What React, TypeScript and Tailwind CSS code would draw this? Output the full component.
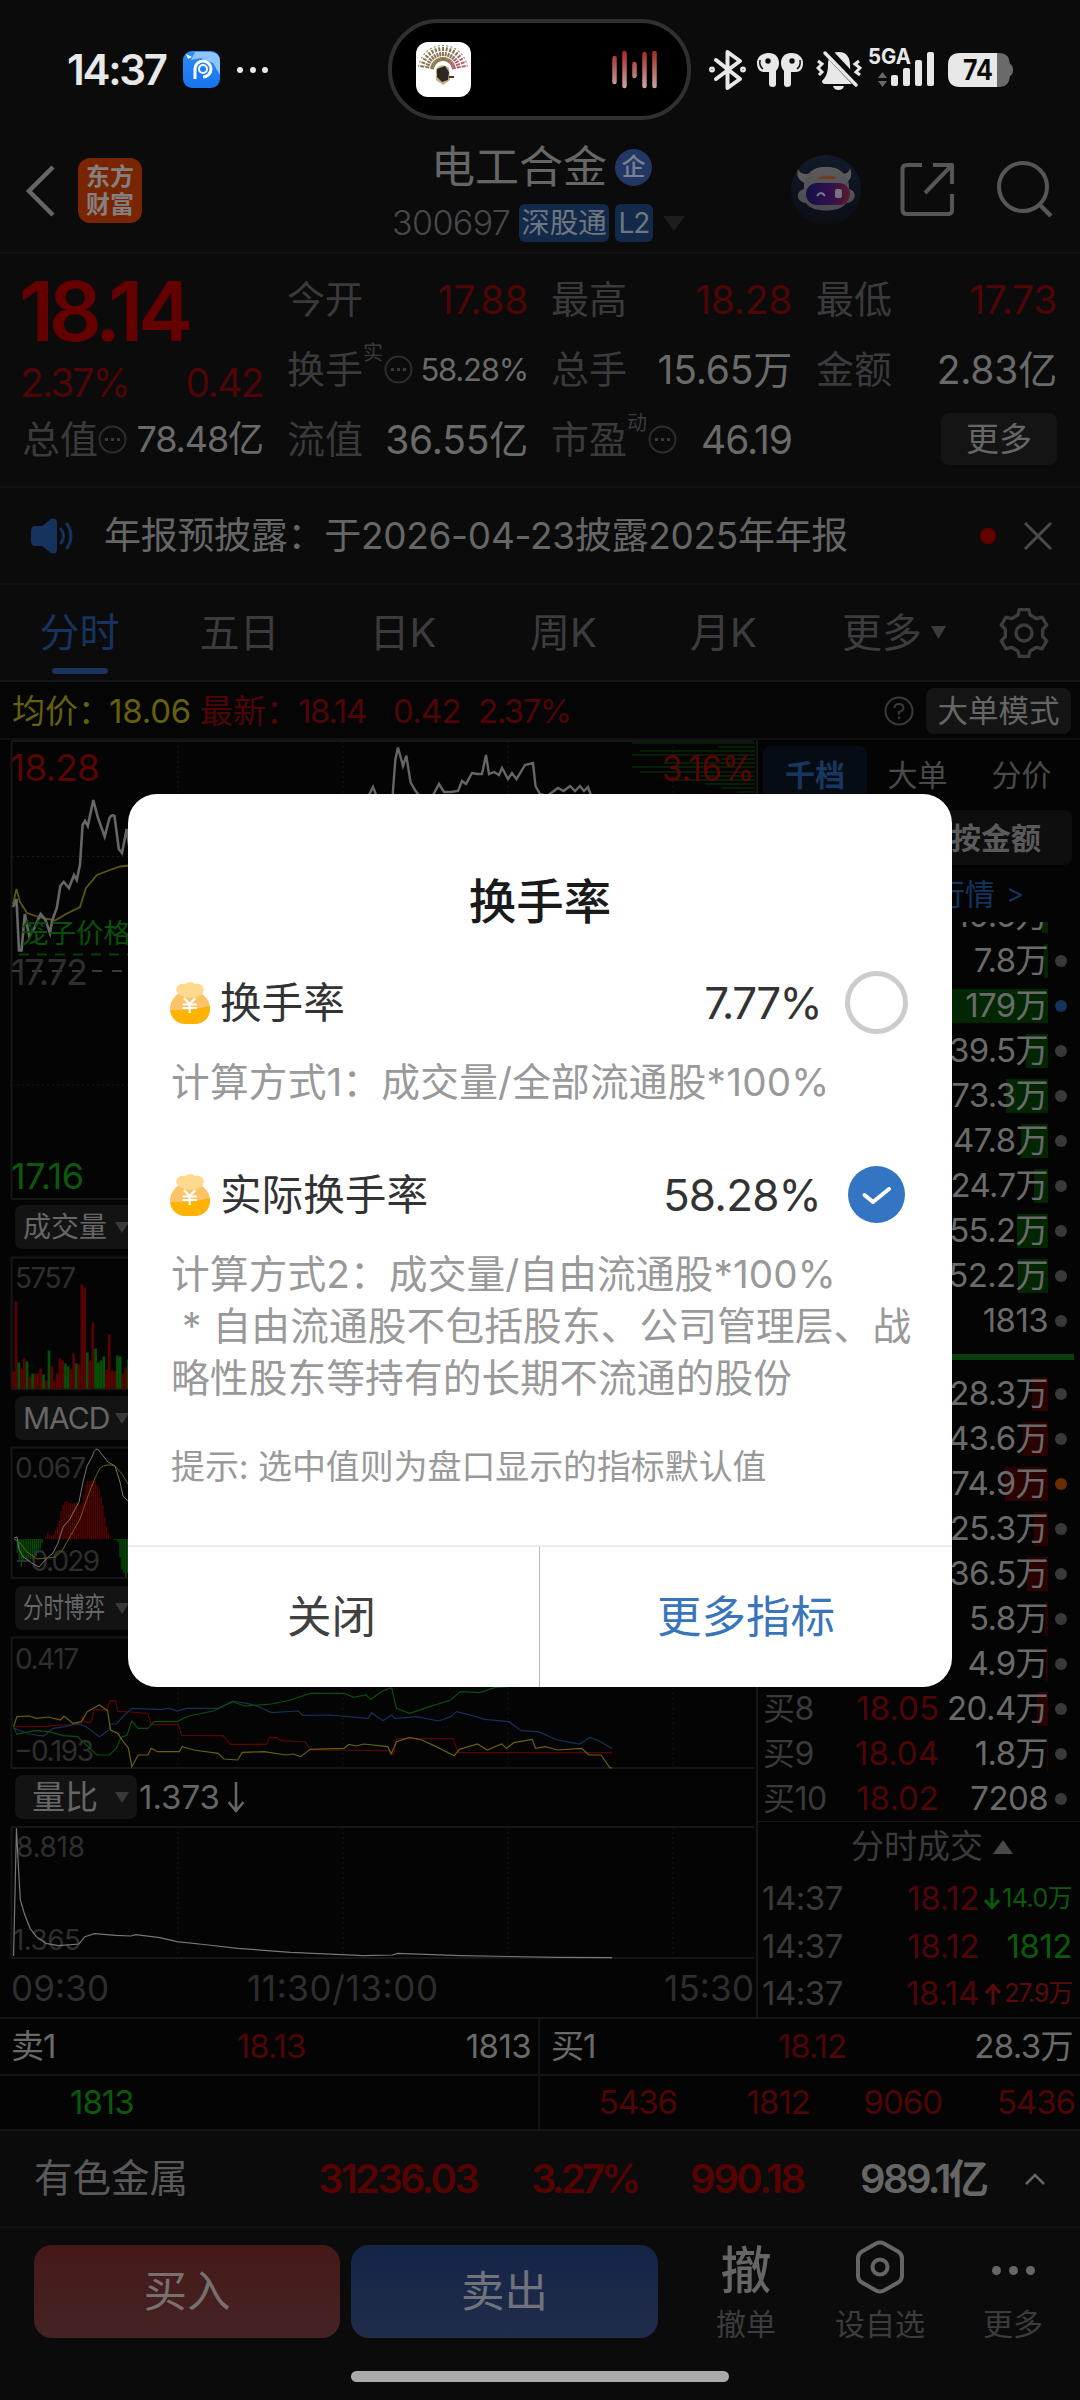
const FONT = "font-['Inter','Noto_Sans_CJK_SC',sans-serif]";

/* ---------- status bar ---------- */

const BluetoothIcon = () => (
  <svg width="37" height="42" viewBox="0 0 37 42" fill="none" stroke="#e8e8e8" strokeWidth="4" strokeLinejoin="round" strokeLinecap="round">
    <path d="M7 11 L31 30 L18.5 39 L18.5 3 L31 12 L7 30" />
    <circle cx="3" cy="20.5" r="1.2" strokeWidth="3.5" />
    <circle cx="34" cy="20.5" r="1.2" strokeWidth="3.5" />
  </svg>
);

const EarbudsIcon = () => (
  <svg width="48" height="36" viewBox="0 0 48 36" fill="#e8e8e8">
    <path d="M13 1 C5 1 1 6 1 11 C1 17 4 20 8 20 L13 20 L13 32 Q13 35 17 35 Q20 35 20 32 L20 19 C22 17 23 14 23 11 C23 5 19 1 13 1 Z" />
    <path d="M35 1 C43 1 47 6 47 11 C47 17 44 20 40 20 L35 20 L35 32 Q35 35 31 35 Q28 35 28 32 L28 19 C26 17 25 14 25 11 C25 5 29 1 35 1 Z" />
    <circle cx="12" cy="9" r="2.700" fill="#0b0b0b" />
    <circle cx="36" cy="9" r="2.700" fill="#0b0b0b" />
    <path d="M4 8 Q3 14 7 17" stroke="#0b0b0b" strokeWidth="1.500" fill="none" />
    <path d="M44 8 Q45 14 41 17" stroke="#0b0b0b" strokeWidth="1.500" fill="none" />
  </svg>
);

const MutedBellIcon = () => (
  <svg width="46" height="40" viewBox="0 0 46 40" fill="#e8e8e8">
    <path d="M23 2 C14 2 12 9 12 15 C12 24 9 28 6 31 Q6 34 9 34 L37 34 Q40 34 40 31 C36 27 34 22 34 15 C34 8 31 2 23 2 Z" />
    <path d="M17 36 L28 36 Q27 40 22.500 40 Q18 40 17 36 Z" />
    <path d="M8 -2 L42 34" stroke="#0b0b0b" strokeWidth="9" />
    <path d="M9 3 L40 35" stroke="#e8e8e8" strokeWidth="3.500" strokeLinecap="round" />
    <path d="M2 11 L6 14 L2 18 L6 22 L3 25" fill="none" stroke="#e8e8e8" strokeWidth="3" />
    <path d="M43 11 L39 14 L44 18 L40 22 L44 25" fill="none" stroke="#e8e8e8" strokeWidth="3" />
  </svg>
);

const SignalIcon = () => (
  <svg width="68" height="42" viewBox="-2 0 68 42" fill="#e8e8e8">
    <text x="-1" y="17" fontSize="22" fontWeight="700" textLength="43" lengthAdjust="spacingAndGlyphs">5GA</text>
    <path d="M13.500 25 L18 31 L9 31 Z M9 34 L18 34 L13.500 40 Z" fill="#6a6a6a" />
    <rect x="22" y="28" width="7" height="11" rx="2" />
    <rect x="34" y="21" width="7" height="18" rx="2" />
    <rect x="46" y="13" width="7" height="26" rx="2" />
    <rect x="58" y="5" width="7" height="34" rx="2" />
  </svg>
);

const BatteryIcon = () => (
  <svg width="66" height="34" viewBox="0 0 66 34">
    <path d="M49 0 H52 Q61 0 62 11 Q65 12 65 17 Q65 22 62 23 Q61 34 52 34 H49 Z" fill="#6a6a6a" />
    <path d="M12 0 H49 V34 H12 Q0 34 0 22 V12 Q0 0 12 0 Z" fill="#e8e8e8" />
    <text x="15" y="27" fontSize="28" fontWeight="700" fill="#0b0b0b" textLength="30" lengthAdjust="spacingAndGlyphs">74</text>
  </svg>
);

const fanRays = Array.from({ length: 17 }, (_, i) => -80 + i * 10);

const StatusBar = () => (
  <div className="flex h-[138px] pt-[19px] text-[#e8e8e8]">
    <div className="flex h-[101px] w-[388px] items-center pl-[67px]">
      <span className="w-[116px] text-[42px] leading-none font-semibold tracking-[-2.3px]">14:37</span>
      <svg width="37" height="37" viewBox="0 0 37 37">
        <defs>
          <linearGradient id="appBlue" x1="0" y1="0" x2="0" y2="1">
            <stop offset="0" stopColor="#2f8df5" />
            <stop offset="1" stopColor="#1673ee" />
          </linearGradient>
        </defs>
        <rect width="37" height="37" rx="9" fill="url(#appBlue)" />
        <path d="M8 9 L12 1 H28 Q37 2 37 10 V24 L30 12 L18 7 Z" fill="#8cc4fb" />
        <path d="M12 28 V18 A8 8 0 1 1 20 26" fill="none" stroke="#fff" strokeWidth="3" />
        <circle cx="20" cy="18" r="4" fill="none" stroke="#fff" strokeWidth="2" />
        <path d="M3 3 L9 6 L5 8 Z" fill="#fff" />
      </svg>
      <div className="ml-[17px] flex gap-[6.5px]">
        <i className="h-1.5 w-1.5 rounded-full bg-[#e8e8e8]" />
        <i className="h-1.5 w-1.5 rounded-full bg-[#e8e8e8]" />
        <i className="h-1.5 w-1.5 rounded-full bg-[#e8e8e8]" />
      </div>
    </div>
    <div className="flex h-[101px] w-[303px] items-center justify-between rounded-[50px] border-4 border-[#303030] bg-black pr-[29px] pl-6">
      <svg width="55" height="55" viewBox="0 0 55 55">
        <rect width="55" height="55" rx="12" fill="#fff" />
        {fanRays.map((a) => (
          <path key={a} d="M27 19 L27 3" stroke={a > 40 ? "#b0606a" : "#8a7350"} strokeWidth="2" strokeDasharray="4 1" transform={`rotate(${a} 27 28)`} />
        ))}
        <path d="M20 27 Q26 20 33 26 L34 38 L27 43 L20 38 Z" fill="#c9b083" />
        <path d="M21 27 L29 24 L33 30 L32 38 L26 40 L21 35 Z" fill="#2b2722" />
        <path d="M33 35 H38" stroke="#4a3a22" strokeWidth="2" />
      </svg>
      <svg width="46" height="38" viewBox="0 0 46 38">
        <defs>
          <linearGradient id="wave" gradientUnits="userSpaceOnUse" x1="0" y1="0" x2="0" y2="38">
            <stop offset="0" stopColor="#a5281f" />
            <stop offset="1" stopColor="#c9aaa4" />
          </linearGradient>
        </defs>
        <path d="M2.500 7 V31 M12.500 2 V35 M22.500 13 V25 M32.500 3 V35 M42.500 2 V35" stroke="url(#wave)" strokeWidth="4.500" strokeLinecap="round" fill="none" />
      </svg>
    </div>
    <div className="flex h-[101px] items-center pl-[18px]">
      <BluetoothIcon />
      <div className="ml-2.5"><EarbudsIcon /></div>
      <div className="ml-[12px]"><MutedBellIcon /></div>
      <div className="mb-1 ml-[5px]"><SignalIcon /></div>
      <div className="ml-[13px]"><BatteryIcon /></div>
    </div>
  </div>
);

/* ---------- title bar ---------- */

const RobotIcon = () => (
  <svg width="70" height="70" viewBox="0 0 70 70">
    <defs>
      <linearGradient id="robotBg" x1="0" y1="0" x2="0" y2="1">
        <stop offset="0" stopColor="#101a2a" />
        <stop offset="1" stopColor="#0b0e14" />
      </linearGradient>
      <linearGradient id="robotHead" x1="0" y1="0" x2="0" y2="1">
        <stop offset="0" stopColor="#5c5a5c" />
        <stop offset="1" stopColor="#4a4a4f" />
      </linearGradient>
      <linearGradient id="visor" x1="0" y1="0" x2="1" y2="0">
        <stop offset="0" stopColor="#14104a" />
        <stop offset="0.6" stopColor="#32124a" />
        <stop offset="1" stopColor="#5c1a2c" />
      </linearGradient>
    </defs>
    <circle cx="35" cy="35" r="35" fill="url(#robotBg)" />
    <path d="M7 14 Q4 24 14 28 L20 18 Q10 21 7 14 Z M59 13 Q63 24 54 28 L48 18 Q57 21 59 13 Z" fill="#5c5a5c" />
    <path d="M35 12 C20 11 12 22 13 34 C4 36 5 47 15 48 C20 58 50 58 55 48 C65 48 67 36 58 34 C59 22 50 11 35 12 Z" fill="url(#robotHead)" />
    <path d="M28 22 Q35 19 45 22 L44 24 H28 Z" fill="#6e3e22" />
    <rect x="15" y="28" width="44" height="22" rx="11" fill="url(#visor)" />
    <path d="M26 41 Q30 35 34 41" stroke="#77778c" strokeWidth="2" fill="none" />
    <rect x="44" y="34" width="7" height="9" rx="2" fill="#7a7280" />
  </svg>
);

const TitleBar = () => (
  <div className="flex h-[116px] border-b-2 border-[#121213]">
    <div className="flex w-[392px] items-start pt-[20px] pl-[24px]">
      <svg className="mt-1.5" width="32" height="54" viewBox="0 0 32 54" fill="none" stroke="#666" strokeWidth="4.500">
        <path d="M29 3 L5 27 L29 51" />
      </svg>
      <div className="ml-[22px] flex h-[65px] w-[64px] flex-col items-center justify-center rounded-[12px] bg-[#7a2502] text-[24px] leading-[28px] font-semibold text-[#858080]">
        <span>东方</span>
        <span>财富</span>
      </div>
    </div>
    <div className="flex w-[301px] flex-col">
      <div className="flex h-[58px] items-center pl-[39px]">
        <span className="text-[44px] leading-none text-[#666]">电工合金</span>
        <span className="ml-[8px] flex h-[37px] w-[37px] items-center justify-center rounded-full bg-[#233764] text-[24px] leading-none font-medium text-[#7c8090]">企</span>
      </div>
      <div className="flex h-[54px] items-center">
        <span className="w-[127px] text-[34px] leading-none font-light tracking-[-0.6px] text-[#48484a]">300697</span>
        <span className="flex h-[38px] w-[90px] items-center justify-center rounded-md bg-[#12294a] text-[28.5px] leading-none text-[#6f7680]">深股通</span>
        <span className="ml-1.5 flex h-[38px] w-[38px] items-center justify-center rounded-md bg-[#12294a] text-[28px] leading-none tracking-[-1px] text-[#6f7680]">L2</span>
        <svg className="ml-[10px]" width="22" height="15" viewBox="0 0 22 15"><path d="M0 0 H22 L11 15 Z" fill="#1d1d1e" /></svg>
      </div>
    </div>
    <div className="flex items-start pt-[17px] pl-[98px]">
      <RobotIcon />
      <svg className="mt-[7px] ml-[39px]" width="55" height="55" viewBox="0 0 55 55" fill="none" stroke="#565656" strokeWidth="4" strokeLinejoin="round">
        <path d="M22 3 H7 Q2.500 3 2.500 7 V48 Q2.500 52 7 52 H48 Q52 52 52 48 V32" />
        <path d="M33 3 H52 V22 M52 3 L25 31" />
      </svg>
      <svg className="mt-[6px] ml-[42px]" width="56" height="56" viewBox="0 0 56 56" fill="none" stroke="#565656" strokeWidth="4">
        <circle cx="26" cy="26" r="24" />
        <path d="M42 43 L54 55" strokeWidth="4.500" />
      </svg>
    </div>
  </div>
);

/* ---------- quote grid ---------- */

const DotsCircle = () => (
  <svg width="29" height="29" viewBox="0 0 29 29" className="shrink-0">
    <circle cx="14.500" cy="14.500" r="13" fill="none" stroke="#2c2c2e" strokeWidth="2" />
    <path d="M7 14.500 h3 M13 14.500 h3 M19 14.500 h3" stroke="#3a3a3c" strokeWidth="3" />
  </svg>
);

type CellProps = { label: string; value: string; sup?: string; dots?: boolean; valueClass: string };

const Cell = ({ label, value, sup, dots, valueClass }: CellProps) => (
  <div className="flex h-[70px] items-center justify-between">
    <div className="flex items-center">
      <span className="text-[38px] leading-none text-[#3a3a3c]">{label}</span>
      {sup && <span className="-mt-[32px] mr-px text-[20px] leading-none text-[#3a3a3c]">{sup}</span>}
      {dots && <DotsCircle />}
    </div>
    <span className={`leading-none whitespace-nowrap ${valueClass}`}>{value}</span>
  </div>
);

const RED = "text-[39px] tracking-[-0.3px] text-[#4f0505]";
const GRAY = "text-[39px] tracking-[-0.2px] text-[#6a6a6a]";

const QuoteGrid = () => (
  <div className="flex h-[234px] border-b-2 border-[#121213] pl-[22px]">
    <div className="w-[241px]">
      <div className="flex h-[107px] items-center pt-2">
        <span className="-ml-[3px] text-[83px] leading-none font-semibold tracking-[-5.4px] text-[#640000]">18.14</span>
      </div>
      <div className="flex h-[43px] items-center justify-between text-[39px] leading-none text-[#4f0505]">
        <span className="-ml-[2px] tracking-[-1.9px]">2.37%</span>
        <span className="tracking-[-1.6px]">0.42</span>
      </div>
      <Cell label="总值" value="78.48亿" dots valueClass="text-[36px] tracking-[-1.1px] text-[#6a6a6a]" />
    </div>
    <div className="ml-[24px] w-[241px] pt-[10px]">
      <Cell label="今开" value="17.88" valueClass={RED} />
      <Cell label="换手" value="58.28%" sup="实" dots valueClass="text-[31px] tracking-[-1.2px] text-[#6a6a6a]" />
      <Cell label="流值" value="36.55亿" valueClass={GRAY} />
    </div>
    <div className="ml-[23px] w-[241px] pt-[10px]">
      <Cell label="最高" value="18.28" valueClass={RED} />
      <Cell label="总手" value="15.65万" valueClass={GRAY} />
      <Cell label="市盈" value="46.19" sup="动" dots valueClass="text-[39px] tracking-[-1px] text-[#6a6a6a]" />
    </div>
    <div className="ml-[24px] w-[241px] pt-[10px]">
      <Cell label="最低" value="17.73" valueClass={RED} />
      <Cell label="金额" value="2.83亿" valueClass={GRAY} />
      <div className="flex h-[70px] items-center justify-end">
        <button className="h-[52px] w-[116px] rounded-[8px] bg-[#141415] text-[33px] leading-none text-[#666]">更多</button>
      </div>
    </div>
  </div>
);

const Notice = () => (
  <div className="flex h-[97px] items-center border-b-2 border-[#121213] pl-[31px]">
    <svg width="43" height="36" viewBox="0 0 43 36">
      <path d="M0 13 Q0 8 5 8 H11 L20 1 Q26 -1 26 5 V31 Q26 37 20 35 L11 28 H5 Q0 28 0 23 Z" fill="#15335c" />
      <path d="M30 11 Q35 18 30 25 M36 6 Q44 18 36 30" fill="none" stroke="#15335c" strokeWidth="3" strokeLinecap="round" />
    </svg>
    <span className="ml-[30px] w-[876px] text-[37px] leading-none tracking-[-0.3px] whitespace-nowrap text-[#666]">年报预披露：于2026-04-23披露2025年年报</span>
    <i className="h-[16px] w-[16px] rounded-full bg-[#640000]" />
    <svg className="ml-[28px]" width="28" height="28" viewBox="0 0 28 28" stroke="#4a4a4c" strokeWidth="3"><path d="M1 1 L27 27 M27 1 L1 27" /></svg>
  </div>
);

// six square teeth: (angle offset, radius) corners repeated every 60deg
const gearPoints = Array.from({ length: 6 }, (_, i) => i * 60 - 90)
  .flatMap((a) => [[a - 19, 19], [a - 11, 24], [a + 11, 24], [a + 19, 19]])
  .map(([a, r]) => `${25 + r * Math.cos((a * Math.PI) / 180)},${25 + r * Math.sin((a * Math.PI) / 180)}`)
  .join(" ");

const GearIcon = () => (
  <svg width="50" height="50" viewBox="0 0 50 50" fill="none" stroke="#3c3c3e" strokeWidth="3.400" strokeLinejoin="round">
    <polygon points={gearPoints} />
    <circle cx="25" cy="25" r="8" />
  </svg>
);

const Tabs = () => (
  <div className="flex h-[97px] items-center border-b-2 border-[#151516] text-[40px] leading-none text-[#3c3c3e]">
    <div className="flex h-full w-[159px] flex-col items-center pt-[28px] text-[#15335c]">
      <span>分时</span>
      <i className="mt-[15px] h-[6px] w-[56px] rounded-full bg-[#15335c]" />
    </div>
    <span className="w-[161px] text-center">五日</span>
    <span className="w-[166px] text-center">日K</span>
    <span className="w-[155px] text-center">周K</span>
    <span className="w-[165px] text-center">月K</span>
    <span className="ml-[36px]">更多</span>
    <svg className="ml-[9px]" width="15" height="13" viewBox="0 0 15 13"><path d="M0 0 H15 L7.500 13 Z" fill="#3c3c3e" /></svg>
    <div className="ml-[53px]"><GearIcon /></div>
  </div>
);

const PriceInfo = () => (
  <div className="flex h-[58px] items-center border-b-2 border-[#111] bg-[#050505] pt-[2px] pl-[12px] text-[33px] leading-none">
    <span className="w-[97px] whitespace-nowrap text-[#66600e]">均价：</span>
    <span className="w-[91px] tracking-[-0.2px] text-[#66600e]">18.06</span>
    <span className="w-[98px] whitespace-nowrap text-[#4f0505]">最新：</span>
    <span className="w-[95px] tracking-[-1.3px] text-[#4f0505]">18.14</span>
    <span className="w-[85px] tracking-[-0.8px] text-[#4f0505]">0.42</span>
    <span className="w-[406px] tracking-[-1.5px] text-[#4f0505]">2.37%</span>
    <svg width="30" height="30" viewBox="0 0 30 30" fill="none" stroke="#3a3a3c" strokeWidth="2">
      <circle cx="15" cy="15" r="13.500" />
      <path d="M10.500 12 Q10.500 8 15 8 Q19.500 8 19.500 12 Q19.500 14.500 15 16 V18.500 M15 20.500 V23" />
    </svg>
    <button className="ml-[12px] h-[46px] w-[145px] rounded-[8px] bg-[#141415] text-[30.5px] leading-none text-[#666]">大单模式</button>
  </div>
);

/* ---------- charts (user units = page pixels, y offset by viewBox) ---------- */

const GRID_X = [178, 343, 508, 673];

const Frame = ({ top, bottom, rows = [] }: { top: number; bottom: number; rows?: number[] }) => (
  <g stroke="#161617" strokeWidth="2" fill="none">
    <path d={`M11.500 ${top} H754 M11.500 ${bottom} H754 M11.500 ${top} V${bottom}`} />
    {GRID_X.map((x) => (
      <path key={x} d={`M${x} ${top} V${bottom}`} strokeWidth="1" strokeDasharray="2 3" />
    ))}
    {rows.map((y) => (
      <path key={y} d={`M12 ${y} H754`} strokeWidth="1" strokeDasharray="2 3" />
    ))}
  </g>
);

// depth lines at the right edge of the price chart: [y, startX]
const DEPTH: [number, number][] = [
  [742, 632], [746, 718], [750, 640], [754, 632], [758, 722], [762, 664], [766, 632],
  [771, 640], [775, 700], [779, 668], [783, 705], [787, 722], [791, 737],
];

const PriceChart = () => (
  <svg width="757" height="465" viewBox="0 739 757 465" className="block">
    <Frame top={740} bottom={1198} rows={[855.5, 1084]} />
    {DEPTH.map(([y, x]) => (
      <path key={y} d={`M${x} ${y} H755`} stroke="#052805" strokeWidth="1.400" />
    ))}
    <text x="10" y="780" fontSize="37" fill="#5a0404" textLength="90">18.28</text>
    <text x="662" y="780" fontSize="36" fill="#5a0404" textLength="92" lengthAdjust="spacingAndGlyphs">3.16%</text>
    <path d="M13 903 L16.500 888 L20 901 L27 912 L40 916.500 L55 919.500 L66 913 L80 906 L86 887 L97 874 L110 869 L120 865.500 L140 863.500" fill="none" stroke="#5c5610" strokeWidth="1.800" />
    <path d="M13 906 L16.500 898 L19 949.500 L21.500 949.500 L24.800 913 L29.300 935 L34.400 927 L40.600 913 L45.500 919 L50 932 L52.300 919 L56.800 907 L60.300 885 L63.700 881 L69 887 L74 874 L76.800 879 L80 863.500 L82.600 824 L85 820 L87.800 825 L93.300 799 L98 817 L104.700 835.500 L109.500 817 Q112 813 114.500 815 L118.800 848 L122 852 L126.700 828 L130 851" fill="none" stroke="#666" strokeWidth="2.600" />
    <path d="M369 794 L373 786 L377 796 M392.500 796 L395.300 759 L398 746.500 L403 765 L406.300 754.500 L410.500 781 L415 789 L420 796 M432 796 L439 783 L444 791 L451 791 L458 790 L462 780 L466 783 L472 772 L477 773 L482 773 L486 754 L489 773 L494 771 L499 774 L502 767 L508 778 L512 772 L516.500 778 L525 764 L533 762 L535.500 785 L540 793 L547 795 L558 787 L563.600 790 L570 785 L575 790 L580 785 L584 790 L588 786 L592 797" fill="none" stroke="#666" strokeWidth="2.400" />
    <path d="M19 953.500 H740" stroke="#073f07" strokeWidth="2" strokeDasharray="10 8" />
    <path d="M12 970 H740" stroke="#3a3a3c" strokeWidth="2" strokeDasharray="10 10" />
    <text x="21" y="941.500" fontSize="27.500" fill="#0a4f0a">笼子价格</text>
    <text x="11" y="983.500" fontSize="36" fill="#2e2e30" textLength="77">17.72</text>
    <text x="11" y="1188" fontSize="36" fill="#0b5a0b" textLength="73">17.16</text>
  </svg>
);

const Chip = ({ label, labelClass, value }: { label: string; labelClass: string; value?: string }) => (
  <div className="flex h-[44px] items-center pl-[15px]">
    <div className="flex h-[44px] w-[122px] items-center justify-between rounded-[8px] bg-[#131314] pr-[8px] text-[#666]">
      <span className={`leading-none whitespace-nowrap ${labelClass}`}>{label}</span>
      <svg className="shrink-0" width="14" height="11" viewBox="0 0 14 11"><path d="M0 0 H14 L7 11 Z" fill="#39393b" /></svg>
    </div>
    {value && (
      <span className="ml-[2px] flex items-center text-[33px] leading-none text-[#666]">
        {value}
        <svg className="ml-[7px]" width="18" height="31" viewBox="0 0 18 31" fill="none" stroke="#666" strokeWidth="2.600"><path d="M9 0 V29 M1.500 20 L9 29 L16.500 20" /></svg>
      </span>
    )}
  </div>
);

// [height, up]
const VOLUME: [number, number][] = [
  [17, 1], [87, 1], [26, 0], [20, 1], [30, 1], [27, 0], [12, 1], [15, 0], [15, 1], [15, 1], [20, 1], [14, 0], [8, 1], [38, 0],
  [22, 1], [8, 1], [15, 1], [30, 1], [28, 1], [25, 0], [22, 0], [19, 1], [35, 1], [25, 0], [24, 1], [104, 1], [101, 1], [36, 0],
  [28, 1], [66, 1], [40, 0], [26, 0], [28, 0], [32, 0], [19, 1], [54, 1], [18, 1], [17, 1], [33, 0], [32, 0], [15, 1], [21, 1], [29, 0],
];

const VolumeChart = () => (
  <svg width="757" height="147" viewBox="0 1249 757 147" className="block">
    <Frame top={1257.5} bottom={1389} />
    {VOLUME.map(([h, up], i) => (
      <rect key={i} x={12 + i * 2.74} y={1388.5 - h} width="2.740" height={h} fill={up ? "#5a0202" : "#065006"} />
    ))}
    <text x="15" y="1287.500" fontSize="28" fill="#2e2e30" textLength="61">5757</text>
  </svg>
);

const MACD_BARS = [
  0, -1, -14, -20, -28, -22, -19, -22, -20, -20, -21, -19, -17, -14, -10, -4, 0, 2, 6, 4, 3, 5, 8, 12, 18, 28, 34, 37, 38, 36,
  36, 35, 36, 37, 36, 34, 36, 44, 54, 58, 58, 59, 58, 58, 54, 48, 42, 34, 22, 12, 6, 1, 0, -1, -1, -3, -18, -30, -34, -38, -34, -24,
];

const MacdChart = () => (
  <svg width="757" height="146" viewBox="0 1440 757 146" className="block">
    <Frame top={1447.500} bottom={1578} />
    {MACD_BARS.map((v, i) => (
      <rect key={i} x={13 + i * 1.9} y={v > 0 ? 1539 - v : 1539} width="1.300" height={Math.abs(v)} fill={v > 0 ? "#5a0202" : "#065006"} />
    ))}
    <text x="15" y="1477.500" fontSize="28" fill="#2e2e30" textLength="71">0.067</text>
    <text x="14" y="1570.500" fontSize="28" fill="#2e2e30" textLength="86">−0.029</text>
    <path d="M14 1538 L17 1537 L19 1549 L23 1557 L28 1560 L33 1564 L39 1567 L47 1558 L53 1553 L58 1543 L63 1527 L70 1519 L75 1509 L79 1502 L83 1482 L87 1466 L92 1457 Q96 1444 100 1452 L108 1462 L115 1466 L120 1482 L123 1496 L128 1501" fill="none" stroke="#77777a" strokeWidth="1" />
    <path d="M14 1539 L20 1543 L27 1552 L37 1559 L47 1558 L55 1557 L62 1551 L72 1533 L80 1519 L88 1496 L95 1478 L100 1468 Q107 1463 115 1466 L122 1474 L128 1484" fill="none" stroke="#68610f" strokeWidth="1" />
  </svg>
);

const GAME_LINES: [string, string][] = [
  ["#5c0404", "30,260 98,260 105,257 168,253 170,228 175,247 188,247 195,208 220,210 228,182 238,182 243,214 268,216 305,220 312,254 368,254 375,286 460,287 475,313 550,313 556,292 572,293 580,302 630,306 640,330 805,332 812,345 818,296 935,296 945,338 1180,338 1263,338"],
  ["#17305a", "30,265 60,282 90,288 110,265 135,260 160,250 178,260 205,290 225,270 228,252 240,252 255,228 272,205 330,208 350,205 365,213 385,205 450,205 480,183 510,190 530,198 560,218 615,213 625,226 680,225 760,235 767,218 790,242 808,225 815,235 860,230 905,243 930,230 942,215 970,225 1000,238 1050,245 1075,272 1110,275 1150,300 1195,312 1218,292 1240,305 1263,326"],
  ["#0b4f0f", "28,262 35,283 70,272 100,275 130,287 160,290 178,315 200,345 225,345 240,325 250,292 262,285 272,243 285,265 305,265 318,245 365,245 390,228 440,213 480,185 505,198 560,192 600,180 640,160 710,160 730,172 755,165 765,178 790,152 808,143 818,205 845,220 880,203 930,180 950,155 990,158 1020,143 1047,140"],
  ["#68610f", "28,260 35,230 60,228 75,235 100,231 125,240 132,228 150,250 168,245 180,215 205,195 222,212 228,270 243,280 252,300 265,325 272,380 285,345 305,345 312,325 325,335 370,335 376,320 400,330 450,340 462,357 490,360 500,337 545,335 590,345 605,342 620,350 640,328 710,325 720,313 735,318 750,312 800,320 807,342 818,305 845,292 870,300 900,320 937,347 948,328 985,312 1005,330 1035,312 1045,325 1060,308 1098,298 1105,325 1125,320 1150,330 1200,325 1215,345 1240,345 1258,383 1263,384"],
];

const GameChart = () => (
  <svg width="757" height="145" viewBox="0 1630 757 145" className="block">
    <Frame top={1637.500} bottom={1768} />
    <text x="15" y="1668.500" fontSize="28" fill="#2e2e30" textLength="64">0.417</text>
    <text x="14" y="1760.500" fontSize="28" fill="#2e2e30" textLength="80">−0.193</text>
    <g transform="translate(0 1640) scale(0.4847 0.33333)" fill="none" strokeWidth="1.200">
      {GAME_LINES.map(([color, pts]) => (
        <polyline key={color} points={pts} stroke={color} vectorEffect="non-scaling-stroke" />
      ))}
    </g>
  </svg>
);

const RatioChart = () => (
  <svg width="757" height="198" viewBox="0 1819 757 198" className="block">
    <Frame top={1827} bottom={1958} />
    <text x="16" y="1857" fontSize="28" fill="#2e2e30" textLength="69">8.818</text>
    <text x="13" y="1950" fontSize="28" fill="#2e2e30" textLength="68">1.365</text>
    <g transform="translate(0 1640) scale(0.4847 0.33333)" fill="none" strokeWidth="1.200">
      <polyline
        points="28,948 34,565 38,680 42,780 50,820 62,865 75,890 95,910 120,917 163,912 175,890 195,881 240,886 270,888 280,884 330,893 365,905 430,915 490,925 600,937 750,947 810,945 820,940 950,947 1150,952 1263,953"
        stroke="#77777a"
        vectorEffect="non-scaling-stroke"
      />
    </g>
    <g fontSize="35" fill="#2e2e30">
      <text x="11" y="2000.500" textLength="98">09:30</text>
      <text x="247" y="2000.500" textLength="191">11:30/13:00</text>
      <text x="664" y="2000.500" textLength="90">15:30</text>
    </g>
  </svg>
);

const Charts = () => (
  <div className="h-[1278px] w-[758px] border-r-2 border-[#161617] bg-[#040404]">
    <PriceChart />
    <Chip label="成交量" labelClass="pl-[8px] text-[28px]" />
    <VolumeChart />
    <Chip label="MACD" labelClass="pl-[8px] text-[30px] tracking-[-1px]" />
    <MacdChart />
    <Chip label="分时博弈" labelClass="ml-[8px] w-[82px] origin-left scale-x-[0.72] text-[28.5px]" />
    <GameChart />
    <Chip label="量比" labelClass="pl-[17px] text-[33px]" value="1.373" />
    <RatioChart />
  </div>
);

/* ---------- order book ---------- */

type Row = { side: string; price: string; amount: string; bar: number; dot?: string };

const ASKS: Row[] = [
  { side: "卖10", price: "18.24", amount: "10.6万", bar: 6 },
  { side: "卖9", price: "18.22", amount: "7.8万", bar: 4 },
  { side: "卖8", price: "18.20", amount: "179万", bar: 120, dot: "bg-[#15335c]" },
  { side: "卖7", price: "18.19", amount: "39.5万", bar: 22 },
  { side: "卖6", price: "18.18", amount: "73.3万", bar: 42 },
  { side: "卖5", price: "18.17", amount: "47.8万", bar: 27 },
  { side: "卖4", price: "18.16", amount: "24.7万", bar: 14 },
  { side: "卖3", price: "18.15", amount: "55.2万", bar: 31 },
  { side: "卖2", price: "18.14", amount: "52.2万", bar: 30 },
  { side: "卖1", price: "18.13", amount: "1813", bar: 0 },
];

const BIDS: Row[] = [
  { side: "买1", price: "18.12", amount: "28.3万", bar: 16 },
  { side: "买2", price: "18.11", amount: "43.6万", bar: 25 },
  { side: "买3", price: "18.10", amount: "74.9万", bar: 43, dot: "bg-[#6b2c04]" },
  { side: "买4", price: "18.09", amount: "25.3万", bar: 14 },
  { side: "买5", price: "18.08", amount: "36.5万", bar: 21 },
  { side: "买6", price: "18.07", amount: "5.8万", bar: 3 },
  { side: "买7", price: "18.06", amount: "4.9万", bar: 2 },
  { side: "买8", price: "18.05", amount: "20.4万", bar: 11 },
  { side: "买9", price: "18.04", amount: "1.8万", bar: 1 },
  { side: "买10", price: "18.02", amount: "7208", bar: 0 },
];

const BookRow = ({ row, barClass }: { row: Row; barClass: string }) => (
  <div className="flex h-[45px] shrink-0 items-center pl-[5px] text-[33px] leading-none whitespace-nowrap">
    <span className="w-[84px] text-[32px] tracking-[-0.5px] text-[#3a3a3c]">{row.side}</span>
    <span className="w-[92px] text-right text-[#4f0505]">{row.price}</span>
    <div className="relative flex h-[34px] w-[109px] items-center justify-end">
      <i className={`absolute right-0 h-[34px] ${barClass}`} style={{ width: row.bar }} />
      <span className="relative tracking-[-0.6px] text-[#6a6a6a]">{row.amount}</span>
    </div>
    <i className={`ml-[7px] h-[12px] w-[12px] rounded-full ${row.dot ?? "bg-[#39393b]"}`} />
  </div>
);

const Tick = ({ price, children, className }: { price: string; children: React.ReactNode; className: string }) => (
  <div className="flex h-[47.5px] items-center pr-[8px] pl-[4px] text-[33px] leading-none">
    <span className="w-[100px] tracking-[-0.5px] text-[#3a3a3c]">14:37</span>
    <span className="w-[117px] text-right tracking-[-0.3px] text-[#4f0505]">{price}</span>
    <span className={`flex flex-1 items-center justify-end whitespace-nowrap ${className}`}>{children}</span>
  </div>
);

const OrderBook = () => (
  <div className="flex h-[1278px] w-[322px] flex-col overflow-hidden bg-[#040404]">
    <div className="flex h-[64px] items-center pt-1.5 pl-[5px] text-[30px] leading-none text-[#4a4a4c]">
      <span className="flex h-[58px] w-[104px] items-center justify-center rounded-[8px] bg-[#060c14] font-bold text-[#17375f]">千档</span>
      <span className="w-[101px] text-center">大单</span>
      <span className="w-[107px] text-center">分价</span>
    </div>
    <div className="mt-[6px] ml-[5px] flex h-[55px] w-[309px] items-center justify-end rounded-[8px] bg-[#0e0e0f] pr-[31px] text-[30px] leading-none font-bold text-[#5a5a5c]">
      按金额
    </div>
    <div className="flex h-[57px] items-center justify-end pr-[56px] text-[30px] leading-none text-[#15335c]">
      千档行情<span className="ml-[11px] text-[27px]">&gt;</span>
    </div>
    <div className="flex h-[421px] flex-col justify-end overflow-hidden">
      {ASKS.map((r) => (
        <BookRow key={r.side} row={r} barClass="bg-[#022602]" />
      ))}
    </div>
    <div className="mt-[11px] mr-[6px] h-[6px] bg-[#0a3d0c]" />
    <div className="mt-[11px] flex h-[450px] flex-col">
      {BIDS.map((r) => (
        <BookRow key={r.side} row={r} barClass="bg-[#2b0202]" />
      ))}
    </div>
    <div className="flex h-[54px] items-center border-t border-[#161617] pb-[4px] pl-[93px] text-[33px] leading-none text-[#3a3a3c]">
      分时成交
      <svg className="ml-[10px]" width="20" height="14" viewBox="0 0 20 14"><path d="M0 14 H20 L10 0 Z" fill="#4a4a4c" /></svg>
    </div>
    <Tick price="18.12" className="text-[25px] tracking-[-0.6px] text-[#0b5a0b]">
      <svg width="16" height="22" viewBox="0 0 16 22" fill="none" stroke="#0b5a0b" strokeWidth="3"><path d="M8 0 V19 M1 12 L8 19.500 L15 12" /></svg>
      <span className="ml-[2px]">14.0万</span>
    </Tick>
    <Tick price="18.12" className="tracking-[-0.5px] text-[#0b5a0b]">1812</Tick>
    <Tick price="18.14" className="text-[25px] tracking-[-1.2px] text-[#5c0a0a]">
      <svg width="16" height="22" viewBox="0 0 16 22" fill="none" stroke="#5c0a0a" strokeWidth="3"><path d="M8 22 V3 M1 10 L8 2.500 L15 10" /></svg>
      <span className="ml-[3px]">27.9万</span>
    </Tick>
  </div>
);

/* ---------- bottom ---------- */

const BestRow = ({ side, price, amount }: { side: string; price: string; amount: string }) => (
  <div className="flex h-[57px] flex-1 items-center pr-[7px] pl-[11px]">
    <span className="w-[130px] text-[#6a6a6a]">{side}</span>
    <span className="flex-1 text-center text-[#4f0505]">{price}</span>
    <span className="w-[130px] text-right tracking-[-0.6px] text-[#6a6a6a]">{amount}</span>
  </div>
);

const BestQuotes = () => (
  <div className="flex h-[114px] border-t-2 border-b-2 border-[#161617] bg-[#040404] text-[33px] leading-none tracking-[-1px]">
    <div className="flex w-[540px] flex-col border-r-2 border-[#131314]">
      <BestRow side="卖1" price="18.13" amount="1813" />
      <div className="flex h-[55px] items-center border-t-2 border-[#131314] pl-[70px] text-[#0b5a0b]">1813</div>
    </div>
    <div className="flex w-[540px] flex-col">
      <BestRow side="买1" price="18.12" amount="28.3万" />
      <div className="flex h-[55px] items-center justify-end border-t-2 border-[#131314] pr-[5px] text-[#4f0505]">
        <span>5436</span>
        <span className="w-[133px] text-right">1812</span>
        <span className="w-[132px] text-right">9060</span>
        <span className="w-[133px] text-right">5436</span>
      </div>
    </div>
  </div>
);

const SectorRow = () => (
  <div className="flex h-[97px] items-center border-b-2 border-[#111112] pl-[34px] text-[40px] leading-none font-semibold text-[#560202]">
    <span className="w-[284px] text-[38.5px] font-normal text-[#5a5a5c]">有色金属</span>
    <span className="w-[213px] tracking-[-2.7px]">31236.03</span>
    <span className="w-[159px] tracking-[-3.8px]">3.27%</span>
    <span className="w-[170px] tracking-[-2.4px]">990.18</span>
    <span className="w-[165px] tracking-[-2.6px] whitespace-nowrap text-[#666]">989.1亿</span>
    <svg width="20" height="12" viewBox="0 0 20 12" fill="none" stroke="#666" strokeWidth="2.500"><path d="M1 11 L10 2 L19 11" /></svg>
  </div>
);

const ActionBar = () => (
  <div className="flex h-[173px] pt-[17px] pl-[34px] text-[#3c3c3e]">
    <button className="h-[93px] w-[306px] rounded-[18px] bg-linear-to-b from-[#451818] to-[#452323] text-[43.5px] leading-none text-[#77706f]">买入</button>
    <button className="ml-[11px] h-[93px] w-[307px] rounded-[18px] bg-linear-to-b from-[#142447] to-[#202c4a] text-[43.5px] leading-none text-[#70737c]">卖出</button>
    <div className="ml-[43px] flex w-[90px] flex-col items-center">
      <span className="flex h-[50px] items-center text-[51px] leading-none font-medium text-[#666]">撤</span>
      <span className="mt-[14px] text-[30px] leading-none">撤单</span>
    </div>
    <div className="ml-[38px] flex w-[102px] flex-col items-center">
      <svg width="50" height="54" viewBox="0 0 50 54" fill="none" stroke="#666" strokeWidth="4" className="-mt-[5px]">
        <path d="M21 3.500 Q25 1.500 29 3.500 L43 11.500 Q47 14 47 18 V36 Q47 40 43 42.500 L29 50.500 Q25 52.500 21 50.500 L7 42.500 Q3 40 3 36 V18 Q3 14 7 11.500 Z" />
        <circle cx="25" cy="27" r="7.500" />
      </svg>
      <span className="mt-[15px] text-[30px] leading-none whitespace-nowrap">设自选</span>
    </div>
    <div className="ml-[37px] flex w-[90px] flex-col items-center">
      <div className="flex h-[50px] items-center gap-[8px]">
        <i className="h-[9px] w-[9px] rounded-full bg-[#666]" />
        <i className="h-[9px] w-[9px] rounded-full bg-[#666]" />
        <i className="h-[9px] w-[9px] rounded-full bg-[#666]" />
      </div>
      <span className="mt-[14px] text-[30px] leading-none">更多</span>
    </div>
  </div>
);

/* ---------- dialog ---------- */

const MoneyBag = () => (
  <svg width="40" height="42" viewBox="0 0 40 42" className="shrink-0">
    <path d="M11 10 C4 14 0 20 0 26 C0 36 7 42 16 42 H24 C33 42 40 36 40 26 C40 20 36 14 29 10 Z" fill="#ffc266" />
    <path d="M0.200 28 C14 29 28 27 39.900 24 C41 35 34 42 24 42 H16 C7 42 1 36 0.200 28 Z" fill="#ffb200" />
    <path d="M10 13 C5 11 5 3 11 2 Q13 1 15 2 Q20 -2 25 2 Q27 1 29 2 C35 3 35 11 31 13 Q20 19 10 13 Z" fill="#ffd98f" />
    <path d="M14 16 L19.500 22 L25.500 16 M12.500 22.500 H27 M12.500 26 H27 M19.700 22 V31" fill="none" stroke="#fff" strokeWidth="2.200" />
  </svg>
);

type OptionProps = { name: string; value: string; valueClass: string; checked?: boolean };

const Option = ({ name, value, valueClass, checked }: OptionProps) => (
  <div className="flex h-[64px] items-center pr-[44px] pl-[42px] text-[#333]">
    <MoneyBag />
    <span className="ml-[10px] flex-1 pt-[2px] text-[41.6px] leading-none">{name}</span>
    <span className={`mr-[24px] leading-none ${valueClass}`}>{value}</span>
    {checked ? (
      <svg width="63" height="63" viewBox="0 0 63 63">
        <circle cx="31.500" cy="31.500" r="28.500" fill="#3375c2" />
        <path d="M19.500 32 L28 39 L44 26" fill="none" stroke="#fff" strokeWidth="4" strokeLinecap="round" strokeLinejoin="round" />
      </svg>
    ) : (
      <i className="h-[63px] w-[63px] rounded-full border-[5px] border-[#ccc]" />
    )}
  </div>
);

const TurnoverDialog = () => (
  <div className="absolute top-[794px] left-[128px] flex h-[893px] w-[824px] flex-col overflow-hidden rounded-[29px] bg-white">
    <h2 className="mt-[84px] text-center text-[47.5px] leading-none font-medium text-[#1a1a1a]">换手率</h2>
    <div className="mt-[45px]"><Option name="换手率" value="7.77%" valueClass="text-[44px] tracking-[-1.7px]" /></div>
    <p className="mt-[21px] pl-[43px] text-[38.7px] leading-[52px] tracking-[0.2px] whitespace-nowrap text-[#999]">计算方式1：成交量/全部流通股*100%</p>
    <div className="mt-[55px]"><Option name="实际换手率" value="58.28%" valueClass="text-[44px] tracking-[-0.8px]" checked /></div>
    <p className="mt-[21px] pl-[43px] text-[38.7px] leading-[52px] tracking-[0.13px] whitespace-pre text-[#999]">
      计算方式2：成交量/自由流通股*100%<br />
      {" * 自由流通股不包括股东、公司管理层、战"}<br />
      略性股东等持有的长期不流通的股份
    </p>
    <p className="mt-[46px] pl-[43px] text-[33.9px] leading-none text-[#999]">提示: 选中值则为盘口显示的指标默认值</p>
    <div className="mt-auto flex h-[142px] border-t-2 border-[#ececec] text-[44.5px] leading-none">
      <button className="w-[412px] border-r border-[#bbb] pr-[4px] text-[#404040]">关闭</button>
      <button className="w-[412px] text-[#3875bb]">更多指标</button>
    </div>
  </div>
);

export default function App() {
  return (
    <div className={`relative h-[2400px] w-[1080px] overflow-hidden bg-[#0b0b0b] ${FONT}`}>
      <StatusBar />
      <TitleBar />
      <QuoteGrid />
      <Notice />
      <Tabs />
      <PriceInfo />
      <div className="flex h-[1277px] overflow-hidden">
        <Charts />
        <OrderBook />
      </div>
      <BestQuotes />
      <SectorRow />
      <ActionBar />
      <div className="mx-auto mt-[-30px] h-[11px] w-[378px] rounded-full bg-[#aaa]" />
      <TurnoverDialog />
    </div>
  );
}
